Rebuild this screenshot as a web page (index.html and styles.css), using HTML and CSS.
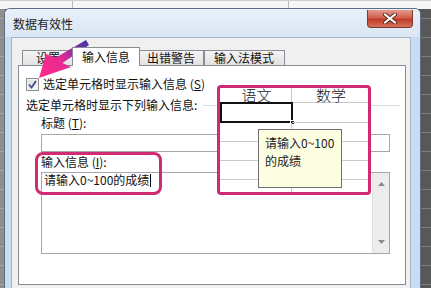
FILE: index.html
```html
<!DOCTYPE html>
<html lang="zh-CN">
<head>
<meta charset="utf-8">
<title>数据有效性</title>
<link rel="stylesheet" href="styles.css">
</head>
<body>
<div class="screen">
  <div class="sheet-top"></div>

  <div class="window">
    <div class="titlebar">
      <span class="title">数据有效性</span>
      <div class="close">
        <svg width="14" height="11" viewBox="0 0 14 11"><path d="M2 1.5 L12 9.5 M12 1.5 L2 9.5" stroke="#5a2a22" stroke-width="4" stroke-linecap="round"/><path d="M2 1.5 L12 9.5 M12 1.5 L2 9.5" stroke="#fff" stroke-width="2.2" stroke-linecap="round"/></svg>
      </div>
    </div>
    <div class="client">
      <div class="tabs">
        <div class="tab tab-first">设置</div>
        <div class="tab active">输入信息</div>
        <div class="tab">出错警告</div>
        <div class="tab tab-last">输入法模式</div>
      </div>
      <div class="panel">
        <div class="check-row">
          <span class="checkbox"><svg width="9" height="9" viewBox="0 0 9 9"><path d="M1 4.5 L3.5 7.5 L8 1" fill="none" stroke="#3c4f86" stroke-width="1.8"/></svg></span>
          <span>选定单元格时显示输入信息 (<u>S</u>)</span>
        </div>
        <div class="group-row">
          <span>选定单元格时显示下列输入信息:</span>
          <span class="group-line"></span>
        </div>
        <div class="fields">
          <div class="field-label">标题 (<u>T</u>):</div>
          <div class="input"></div>
          <div class="field-label">输入信息 (<u>I</u>):</div>
          <div class="textarea">
            <div class="text">请输入0~100的成绩<span class="caret"></span></div>
            <div class="scrollbar">
              <svg width="7" height="4" viewBox="0 0 7 4"><path d="M0 4 L3.5 0 L7 4Z" fill="#8a8a8a"/></svg>
              <svg width="7" height="4" viewBox="0 0 7 4"><path d="M0 0 L3.5 4 L7 0Z" fill="#8a8a8a"/></svg>
            </div>
          </div>
        </div>
      </div>
    </div>
  </div>

  <div class="callout-left"></div>

  <div class="snippet">
    <div class="grid">
      <div class="cell head">语文</div>
      <div class="cell head">数学</div>
      <div class="cell selected"><span class="handle"></span></div><div class="cell"></div>
      <div class="cell"></div><div class="cell"></div>
      <div class="cell"></div><div class="cell"></div>
      <div class="cell"></div><div class="cell"></div>
      <div class="cell last"></div><div class="cell last"></div>
    </div>
    <div class="tooltip">请输入0~100<br>的成绩</div>
  </div>

  <svg class="arrow" width="431" height="288" viewBox="0 0 431 288">
    <defs>
      <linearGradient id="ag" x1="88" y1="42" x2="40" y2="77" gradientUnits="userSpaceOnUse">
        <stop offset="0" stop-color="#3f35a8"/>
        <stop offset="0.3" stop-color="#9a2aa6"/>
        <stop offset="0.55" stop-color="#e92a92"/>
        <stop offset="1" stop-color="#ff2a8a"/>
      </linearGradient>
    </defs>
    <polygon points="39,78 46,54 56,57.5 86,40 89,45 62.5,63 71,67" fill="url(#ag)"/>
  </svg>
</div>
</body>
</html>
```

FILE: styles.css
```css
* { box-sizing: border-box; margin: 0; padding: 0; }
html, body { width: 431px; height: 288px; overflow: hidden; }
body {
  font-family: "Noto Sans CJK SC", "Noto Sans", sans-serif;
  font-size: 12px;
  color: #111;
}

.screen {
  position: relative;
  width: 431px;
  height: 288px;
  overflow: hidden;
  background:
    repeating-linear-gradient(to bottom, transparent 0 18px, rgba(255,255,255,0.22) 18px 19px),
    linear-gradient(90deg, #8e8e8e 0 5px, #585858 5px);
}

.sheet-top {
  height: 9px;
  background:
    linear-gradient(90deg, transparent 72px, #b9b9b9 72px 73px, transparent 73px 288px, #b9b9b9 288px 289px, transparent 289px),
    #f6f6f6;
  border-top: 1px solid #cfcfcf;
}

/* window */
.window {
  position: absolute;
  left: 4px;
  top: 8px;
  width: 417px;
  height: 292px;
  border: 1px solid #5d6e84;
  border-radius: 6px 6px 0 0;
  background: #cbdcf1;
  padding: 0 9px 0 6px;
  display: flex;
  flex-direction: column;
}

.titlebar {
  height: 28px;
  display: flex;
  align-items: center;
  justify-content: space-between;
  background: linear-gradient(#e8f0f9, #dae6f4);
  margin: 0 -9px 0 -6px;
  padding: 0 7px 0 8px;
  border-radius: 5px 5px 0 0;
}
.title { font-size: 12px; color: #1b1b1b; }

.close {
  align-self: flex-start;
  width: 46px;
  height: 18px;
  margin-top: 1px;
  border: 1px solid #7b3a30;
  border-top: none;
  border-radius: 0 0 4px 4px;
  background: linear-gradient(#e59a8c 0%, #d0604f 45%, #c03a28 55%, #d4725b 100%);
  display: flex;
  align-items: center;
  justify-content: center;
}

.client {
  flex: 1;
  background: #f0f0f0;
  border: 1px solid #a3b4c9;
  border-bottom: none;
  padding: 9px 4px 0 6px;
  display: flex;
  flex-direction: column;
}

.tabs {
  height: 18px;
  display: flex;
  align-items: flex-end;
  padding-left: 4px;
}
.tab {
  height: 15px;
  line-height: 14px;
  padding: 0 8px;
  border: 1px solid #898c95;
  border-bottom: none;
  background: linear-gradient(#f4f4f4, #e2e2e2);
  white-space: nowrap;
}
.tab-first { width: 52px; text-align: center; }
.tab-last { padding: 0 10px 0 9px; }
.tab.active {
  position: relative;
  z-index: 1;
  height: 19px;
  line-height: 16px;
  padding: 1px 9px 0;
  margin: 0 -2px -1px;
  background: #fff;
}

.panel {
  height: 220px;
  background: #fff;
  border: 1px solid #898c95;
  padding: 11px 0 0 7px;
  display: flex;
  flex-direction: column;
}

.check-row {
  height: 14px;
  display: flex;
  align-items: center;
  gap: 4px;
  line-height: 14px;
}
.checkbox {
  width: 13px;
  height: 13px;
  border: 1px solid #8e8f8f;
  background: linear-gradient(135deg, #dcdcdc, #f8f8f8);
  box-shadow: inset 0 0 0 1px #f4f4f4;
  display: flex;
  align-items: center;
  justify-content: center;
}

.group-row {
  margin-top: 6px;
  height: 16px;
  line-height: 16px;
  display: flex;
  align-items: center;
  gap: 6px;
  padding-right: 5px;
}
.group-line { flex: 1; height: 1px; background: #d5dfe5; }

.fields {
  padding-left: 15px;
  padding-right: 15px;
  display: flex;
  flex-direction: column;
}
.field-label { margin-top: 2px; height: 16px; line-height: 16px; }
.input {
  margin-top: 3px;
  height: 18px;
  border: 1px solid #a7a7a7;
  background: #fff;
}
.textarea {
  margin-top: 2px;
  height: 82px;
  border: 1px solid #a7a7a7;
  background: #fff;
  display: flex;
}
.text {
  flex: 1;
  padding-left: 2px;
  line-height: 14px;
  display: flex;
  align-items: center;
  align-self: flex-start;
  height: 14px;
}
.caret { width: 1px; height: 13px; background: #000; margin-left: 1px; }
.scrollbar {
  width: 17px;
  background: #ececec;
  border-left: 1px solid #e0e0e0;
  display: flex;
  flex-direction: column;
  justify-content: space-between;
  align-items: center;
  padding: 9px 0 9px;
}

/* annotations */
.callout-left {
  position: absolute;
  left: 35px;
  top: 152px;
  width: 127px;
  height: 43px;
  border: 3px solid #cf2a72;
  border-radius: 8px;
}

.snippet {
  position: absolute;
  left: 217px;
  top: 85px;
  width: 154px;
  height: 110px;
  border: 3px solid #cf2a72;
  border-radius: 4px;
  background: #fff;
}
.grid {
  display: grid;
  grid-template-columns: 72px 1fr;
  grid-template-rows: 15px 20px 19px 19px 19px 1fr;
  height: 100%;
}
.cell {
  border-right: 1px solid #cacaca;
  border-bottom: 1px solid #cacaca;
  position: relative;
}
.cell:nth-child(2n) { border-right: none; }
.cell.last { border-bottom: none; }
.cell.head {
  font-size: 15px;
  line-height: 15px;
  height: 15px;
  display: flex;
  align-items: flex-end;
  justify-content: center;
  padding-left: 2px;
  font-weight: 300;
  color: #222;
}
.cell.selected {
  border: 2px solid #111;
  margin: -1px -1px 0 0;
}
.handle {
  position: absolute;
  right: -4px;
  bottom: -4px;
  width: 5px;
  height: 5px;
  background: #111;
  border: 1px solid #fff;
}
.tooltip {
  position: absolute;
  left: 38px;
  top: 41px;
  width: 84px;
  height: 59px;
  background: #fdfde2;
  border: 1px solid #6f6f6f;
  padding: 4px 0 0 6px;
  line-height: 18px;
  font-size: 12px;
  color: #222;
}

.arrow { position: absolute; left: 0; top: 0; pointer-events: none; }
```
